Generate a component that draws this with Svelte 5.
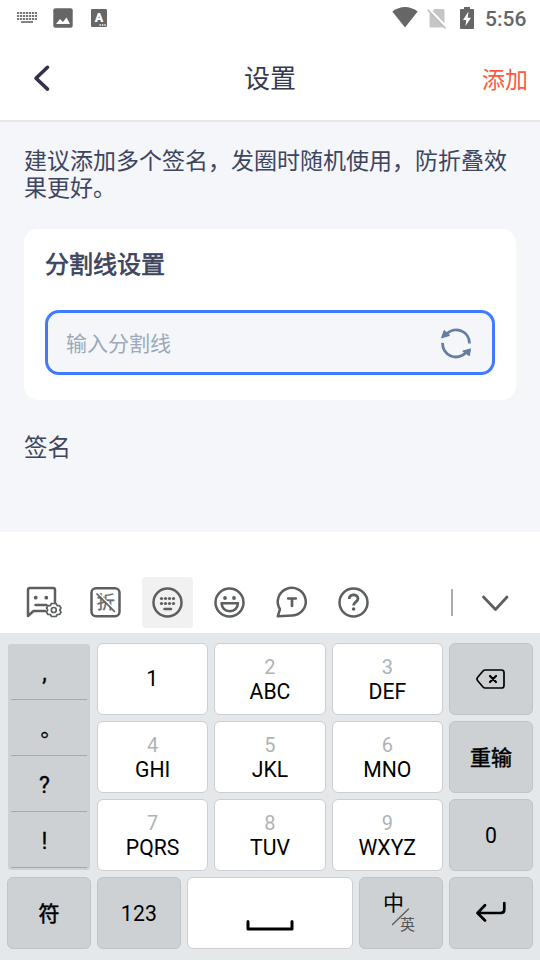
<script lang="ts">
  interface Key {
    digit: string;
    letters?: string;
  }

  const keyRows: Key[][] = [
    [{ digit: '1' }, { digit: '2', letters: 'ABC' }, { digit: '3', letters: 'DEF' }],
    [{ digit: '4', letters: 'GHI' }, { digit: '5', letters: 'JKL' }, { digit: '6', letters: 'MNO' }],
    [{ digit: '7', letters: 'PQRS' }, { digit: '8', letters: 'TUV' }, { digit: '9', letters: 'WXYZ' }],
  ];
  const symbols = [',', '。', '?', '!'];
  const dots = [19.5, 23.5, 27.5, 31.5];

  let divider = $state('');
</script>

<div class="screen" lang="zh-CN">
  <div class="status">
    <svg width="22" height="14" viewBox="0 0 22 14">
      <path d="M1 2h20M1 5h20M1 8h20" stroke="#777" stroke-width="1.8" stroke-dasharray="2.2 0.8" />
      <path d="M5 11h12" stroke="#777" stroke-width="1.8" />
    </svg>
    <svg class="photo" width="20" height="20" viewBox="0 0 20 20">
      <rect x="0.3" y="0.3" width="19.4" height="19.4" rx="2" fill="#666" />
      <path d="M3 16l4-5 3 3 3.5-4.5L17 16z" fill="#fff" />
    </svg>
    <svg class="lang" width="16" height="18" viewBox="0 0 16 18">
      <rect width="16" height="18" rx="1.2" fill="#666" />
      <text x="8" y="13" text-anchor="middle" font-size="12.5" font-weight="900" fill="#fff">A</text>
      <path d="M8.5 16h6.5" stroke="#fff" stroke-width="1.4" stroke-dasharray="1.4 1" />
    </svg>
    <svg class="wifi" width="26" height="21" viewBox="0 0 26 21">
      <path d="M0.3 4.6C8-1.4 18-1.4 25.7 4.6L13 20.500z" fill="#666" />
    </svg>
    <svg class="sim" width="20" height="21" viewBox="0 0 20 21">
      <path d="M7.5 1H16q1.5 0 1.5 1.5V18q0 1.5-1.5 1.5H4Q2.5 19.5 2.5 18V6z" fill="#c5c5c5" />
      <path d="M1.6 1l18 19" stroke="#fff" stroke-width="3.2" />
      <path d="M0.6 1.8l18 18.6" stroke="#bbb" stroke-width="1.5" />
    </svg>
    <svg class="battery" width="14" height="22" viewBox="0 0 14 22">
      <path d="M4 0h6v2h3q1 0 1 1v18q0 1-1 1H1q-1 0-1-1V3q0-1 1-1h3z" fill="#666" />
      <path d="M8.500 4.500L3 13h3.300l-.8 6L11 10.800H7.700z" fill="#fff" />
    </svg>
    <span class="time">5:56</span>
  </div>

  <header>
    <button class="back" aria-label="返回">
      <svg width="18" height="28" viewBox="0 0 18 28">
        <path d="M14.500 3.300L3 14.200l11.500 10.900" fill="none" stroke="#35304a" stroke-width="3.600" stroke-linecap="round" stroke-linejoin="round" />
      </svg>
    </button>
    <h1>设置</h1>
    <button class="add">添加</button>
  </header>

  <main>
    <p>建议添加多个签名，发圈时随机使用，防折叠效果更好。</p>
    <section>
      <h2>分割线设置</h2>
      <label class="field">
        <input type="text" placeholder="输入分割线" bind:value={divider} />
        <svg width="32" height="32" viewBox="0 0 32 32">
          <path d="M6 7.500A13.400 13.400 0 0 1 29.500 16.500M2.600 15.800A13.400 13.400 0 0 0 26 25.500" fill="none" stroke="#667da3" stroke-width="2.800" />
          <path d="M4.200 3.700L1.700 10.800 9.300 8.500zM30.500 22l-1.200 6.500L23 24z" fill="#667da3" stroke="#667da3" stroke-width="1.200" stroke-linejoin="round" />
        </svg>
      </label>
    </section>
    <h3>签名</h3>
  </main>

  <div class="toolbar">
    <svg viewBox="0 0 51 51">
      <path d="M37 25V13q0-2-2-2H12q-2 0-2 2v26l5.500-5H27" />
      <path d="M17.500 28h11" />
      <circle class="dot" cx="17.700" cy="20.700" r="1.900" />
      <circle class="dot" cx="28.300" cy="20.700" r="1.900" />
      <path class="thin" d="M33.500 26.500h4.500l1.200 2.200h2.300l1.500 2.200-1.200 2.100 1.200 2.200-1.500 2.300h-2.300L38 39.500h-4.500l-1.200-2H30l-1.500-2.300 1.200-2.200-1.200-2.100 1.500-2.200h2.300z" />
      <circle class="thin" cx="35.800" cy="33" r="2.500" />
    </svg>
    <svg viewBox="0 0 51 51">
      <rect x="11.500" y="11.300" width="28" height="28" rx="4.500" />
      <text class="fold" x="25.700" y="32" text-anchor="middle">折</text>
      <path d="M18 16l18 18" stroke-width="1.500" class="gap" />
      <path class="thin" d="M17 17l17.500 17.500" />
    </svg>
    <svg class="active" viewBox="0 0 51 51">
      <circle cx="25.500" cy="25.500" r="14" />
      {#each dots as x}
        <circle class="dot" cx={x} cy="21.500" r="1.600" />
        <circle class="dot" cx={x} cy="26.500" r="1.600" />
      {/each}
      <path d="M22.500 32h6.500" />
    </svg>
    <svg viewBox="0 0 51 51">
      <circle cx="25.500" cy="25.500" r="14" />
      <circle class="dot" cx="21" cy="21" r="1.900" />
      <circle class="dot" cx="30" cy="21" r="1.900" />
      <path d="M17.500 26.200h16.500q-.8 8-8.200 8t-8.300-8z" />
    </svg>
    <svg viewBox="0 0 51 51">
      <path d="M11.800 39.200l2.200-7A14 13.800 0 1 1 26.500 38.500z" />
      <path d="M22.200 21.500h7.600M26 21.500v7.500" stroke-width="2.700" />
    </svg>
    <svg viewBox="0 0 51 51">
      <circle cx="25.500" cy="25.500" r="14" />
      <path class="mark" d="M21.200 22c0-5.500 8.800-5.300 8.800-.5 0 3.500-4.400 3.300-4.400 7" />
      <circle class="dot" cx="25.600" cy="32" r="1.800" />
    </svg>
    <i></i>
    <svg class="close" viewBox="0 0 30 20">
      <path d="M3.500 4l12 12.500L27 4" />
    </svg>
  </div>

  <div class="keyboard">
    <div class="symbols">
      {#each symbols as symbol}
        <span class:stop={symbol === '。'}>{symbol}</span>
      {/each}
    </div>
    <div class="keys">
      {#each keyRows as row}
        {#each row as key}
          <button class="key">
            {#if key.letters}
              <small>{key.digit}</small>
              <span>{key.letters}</span>
            {:else}
              <span class="single">{key.digit}</span>
            {/if}
          </button>
        {/each}
      {/each}
    </div>
    <div class="side">
      <button class="key dark" aria-label="删除">
        <svg width="32" height="24" viewBox="0 0 32 24">
          <path d="M10 3h16.500q2.500 0 2.500 2.500v13q0 2.500-2.500 2.500H10q-1 0-2-1L2.500 13.500q-1.300-1.500 0-3L8 4q1-1 2-1z" stroke-width="1.700" />
          <path d="M15 9l6 6m0-6l-6 6" stroke-width="2.200" />
        </svg>
      </button>
      <button class="key dark heavy">重输</button>
      <button class="key dark">0</button>
    </div>
    <div class="bottom">
      <button class="key dark heavy">符</button>
      <button class="key dark number">123</button>
      <button class="key" aria-label="空格">
        <svg class="space" width="48" height="12" viewBox="0 0 48 12">
          <path d="M2 1.500v7.500h44v-7.500" stroke-width="3" />
        </svg>
      </button>
      <button class="key dark">
        <svg width="82" height="70" viewBox="0 0 82 70">
          <text class="zh" x="33.500" y="32" text-anchor="middle">中</text>
          <path class="slash" d="M32.500 46.500L48.500 31" />
          <text class="en" x="47.500" y="52" text-anchor="middle">英</text>
        </svg>
      </button>
      <button class="key dark" aria-label="换行">
        <svg class="enter" width="32" height="24" viewBox="0 0 32 24">
          <path d="M29.300 3v6.500q0 3.500-3.500 3.500H3M10 5.300L2.500 13l7.500 7.500" stroke-width="2.700" />
        </svg>
      </button>
    </div>
  </div>
</div>

<style>
  :global(body) {
    background: #fff;
  }

  .screen {
    width: 540px;
    height: 960px;
    display: flex;
    flex-direction: column;
    overflow: hidden;
    font-family: Roboto, "Noto Sans CJK SC", sans-serif;
  }

  .screen * {
    box-sizing: border-box;
  }

  svg {
    display: block;
    flex: none;
  }

  button {
    padding: 0;
    border: 0;
    background: none;
    font: inherit;
  }

  h1, h2, h3, p {
    margin: 0;
    font-weight: 400;
  }

  .status {
    height: 36px;
    padding: 0 13px 0 16px;
    display: flex;
    align-items: center;
  }

  .photo {
    margin-left: 15px;
  }

  .lang {
    margin-left: 18px;
  }

  .wifi {
    margin: 0 0 1px auto;
  }

  .sim {
    margin-left: 9px;
  }

  .battery {
    margin: 0 11px 1px 13px;
  }

  .time {
    width: 42px;
    color: #666;
    font-size: 21px;
    font-weight: 500;
    line-height: 36px;
    white-space: nowrap;
    padding-top: 2px;
  }

  header {
    height: 86px;
    padding: 0 13px 0 33px;
    border-bottom: 2px solid #e7e7e9;
    display: grid;
    grid-template-columns: 80px 1fr 100px;
    align-items: center;

    h1 {
      padding-top: 2px;
      text-align: center;
      font-size: 26px;
      line-height: 38px;
      color: #35394e;
    }
  }

  .add {
    margin-right: -1px;
    text-align: right;
    font-size: 23px;
    color: #ff5a43;
  }

  main {
    height: 410px;
    padding: 26px 24px 0;
    background: #f4f6fa;
    color: #3d455f;

    p {
      width: 488px;
      font-size: 23px;
      line-height: 27px;
    }

    section {
      height: 171px;
      margin-top: 27px;
      padding: 18px 21px 0;
      border-radius: 14px;
      background: #fff;
    }

    h2 {
      font-size: 24px;
      line-height: 36px;
      -webkit-text-stroke: 0.7px #3d455f;
    }

    h3 {
      margin-top: 30px;
      font-size: 23.5px;
      line-height: 36px;
    }
  }

  .field {
    height: 65px;
    margin-top: 27px;
    padding: 0 20px 0 18px;
    display: flex;
    align-items: center;
    border: 3px solid #3f7bff;
    border-radius: 14px;
    background: #f4f6fa;
  }

  input {
    flex: 1;
    min-width: 0;
    padding: 2px 0 0;
    border: 0;
    outline: 0;
    background: none;
    font: inherit;
    font-size: 21px;

    &::placeholder {
      color: #9ba9b8;
    }
  }

  .toolbar {
    height: 101px;
    padding: 45px 0 0 18px;
    display: flex;
    gap: 11px;

    svg {
      width: 51px;
      height: 51px;
      border-radius: 4px;
      fill: none;
      stroke: #5c5f5f;
      stroke-width: 2.5;
      stroke-linecap: round;
      stroke-linejoin: round;
    }

    .active {
      background: #f1f1f1;
    }

    .dot {
      fill: #5c5f5f;
      stroke: none;
    }

    .thin {
      stroke-width: 1.7;
    }

    .gap {
      stroke: #fff;
    }

    .mark {
      stroke-width: 2.8;
      stroke-linecap: butt;
    }

    .fold {
      fill: #6c6f6f;
      stroke: #6c6f6f;
      stroke-width: 0.4;
      font-size: 18px;
    }

    i {
      width: 2px;
      height: 27px;
      margin: 12px 0 0 61px;
      background: #aaa;
    }

    .close {
      width: 30px;
      height: 20px;
      margin: 16px 0 0 16px;
      stroke-width: 2.8;
    }
  }

  .keyboard {
    height: 327px;
    padding: 10px 7px 11px;
    background: #e4e8eb;
    display: grid;
    grid-template-columns: 84px 1fr 84px;
    grid-template-rows: 228px 72px;
    gap: 6px;
    font-size: 21.2px;
  }

  .symbols {
    height: 226px;
    margin: 1px 1px 0;
    padding: 0 3px;
    border-radius: 3px;
    background: #cdd1d4;

    span {
      height: 56px;
      padding: 10px 9px 0 0;
      display: block;
      border-bottom: 1px solid #a5a9ac;
      line-height: 40px;
      text-align: center;
      font-size: 23px;
      -webkit-text-stroke: 0.3px #000;
    }

    .stop {
      padding: 9px 0 0 4px;
      font-size: 21px;
    }
  }

  .keys {
    display: grid;
    grid-template-columns: repeat(3, 1fr);
    gap: 6px;
  }

  .side {
    display: grid;
    gap: 6px;
  }

  .bottom {
    grid-column: 1 / -1;
    display: grid;
    grid-template-columns: 84px 84px 1fr 84px 84px;
    gap: 6px;
  }

  .key {
    height: 72px;
    display: flex;
    flex-direction: column;
    align-items: center;
    justify-content: center;
    border: 1px solid #cbced2;
    border-radius: 6px;
    background: #fff;
    color: #000;
    line-height: 25px;

    small {
      padding-top: 1px;
      line-height: 24px;
      font-size: 20px;
      color: #b0b3b3;
    }

    .single {
      margin: -2px 1px 0 0;
    }

    path {
      fill: none;
      stroke: #000;
      stroke-linecap: round;
      stroke-linejoin: round;
    }

    .slash {
      stroke: #555;
      stroke-width: 1.2;
    }

    .zh {
      font-size: 21px;
    }

    .en {
      font-size: 15px;
      fill: #555;
    }
  }

  .dark {
    background: #cdd1d4;
    border-color: #c0c4c7;
  }

  .heavy {
    padding-top: 2px;
    font-size: 21px;
    -webkit-text-stroke: 0.5px #000;
  }

  .number {
    letter-spacing: 0.3px;
  }

  .space {
    margin-top: 26px;
  }

  .enter {
    margin-bottom: 2px;
  }
</style>
